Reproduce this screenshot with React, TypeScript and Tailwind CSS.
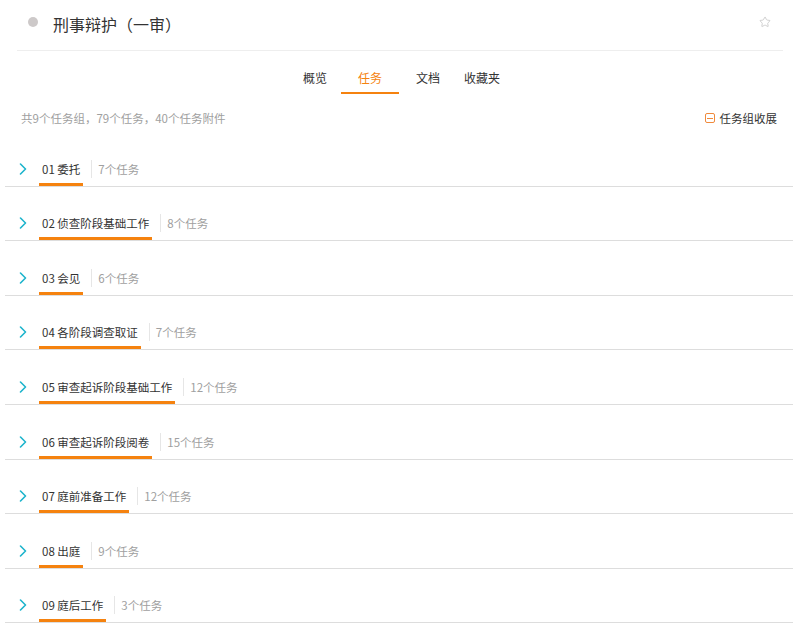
import { Star } from "lucide-react";

const groups = [
  { title: "01 委托", count: "7个任务" },
  { title: "02 侦查阶段基础工作", count: "8个任务" },
  { title: "03 会见", count: "6个任务" },
  { title: "04 各阶段调查取证", count: "7个任务" },
  { title: "05 审查起诉阶段基础工作", count: "12个任务" },
  { title: "06 审查起诉阶段阅卷", count: "15个任务" },
  { title: "07 庭前准备工作", count: "12个任务" },
  { title: "08 出庭", count: "9个任务" },
  { title: "09 庭后工作", count: "3个任务" },
];

const tabs = [
  { label: "概览", w: "w-[52px]" },
  { label: "任务", w: "w-[58px]" },
  { label: "文档", w: "w-[58px]" },
  { label: "收藏夹", w: "w-[50px]" },
];

const Chevron = () => (
  <svg width="8" height="12" viewBox="0 0 8 12" fill="none">
    <path d="M1.5 1 L6.5 6 L1.5 11" stroke="#1db4cc" strokeWidth="1.6" strokeLinecap="round" strokeLinejoin="round" />
  </svg>
);

const App = () => {
  return (
    <div
      className="min-h-screen w-[800px] bg-white text-[#333]"
      style={{ fontFamily: '"Noto Sans CJK SC", "Noto Sans", sans-serif' }}
    >
      {/* header */}
      <div className="mx-[17px] h-[51px] pb-[6px] border-b border-[#eeeeee] flex items-center">
        <span className="ml-[11px] w-[10px] h-[10px] rounded-full bg-[#cdc9c9]" />
        <h1 className="ml-[15px] text-[16px] leading-[22px] text-[#333] mt-[3px]">刑事辩护（一审）</h1>
        <Star className="ml-auto mr-[12px] text-[#c4c4c4]" size={12} strokeWidth={1.6} />
      </div>

      {/* tabs */}
      <div className="pt-[12px] pr-[4px] flex justify-center">
        {tabs.map((t) => (
          <div
            key={t.label}
            className={
              t.label === "任务"
                ? `${t.w} h-[31px] flex items-center justify-center text-[12px] border-b-2 border-[#f5820f] text-[#f5820f]`
                : `${t.w} h-[31px] flex items-center justify-center text-[12px] border-b-2 border-transparent text-[#333]`
            }
          >
            {t.label}
          </div>
        ))}
      </div>

      {/* summary */}
      <div className="h-[38px] pt-[15px] pl-[21px] pr-[23px] flex items-start justify-between text-[11.5px] leading-[18px]">
        <span className="text-[#a0a0a0]">共9个任务组，79个任务，40个任务附件</span>
        <span className="flex items-center gap-[5px] text-[#333]">
          <span className="w-[10px] h-[10px] rounded-[2px] border border-[#f08a3c] flex items-center justify-center">
            <span className="w-[6px] h-px bg-[#f08a3c]" />
          </span>
          任务组收展
        </span>
      </div>

      {/* groups */}
      <div className="ml-[5px] mr-[7px]">
        {groups.map((g) => (
          <div key={g.title} className="h-[54.6px] border-b border-[#dddddd] flex items-end pl-[14px]">
            <div className="h-[18px] mb-[8px] flex items-center">
              <Chevron />
            </div>
            <div className="ml-[12px] px-[3px] pb-[5px] border-b-[3px] border-[#f5820f] text-[11.5px] leading-[18px] text-[#333]">
              {g.title}
            </div>
            <span className="ml-[8px] mb-[8px] w-px h-[18px] bg-[#e6e6e6]" />
            <span className="ml-[6px] mb-[8px] text-[11.5px] leading-[18px] text-[#a0a0a0]">{g.count}</span>
          </div>
        ))}
      </div>
    </div>
  );
};

export default App;
